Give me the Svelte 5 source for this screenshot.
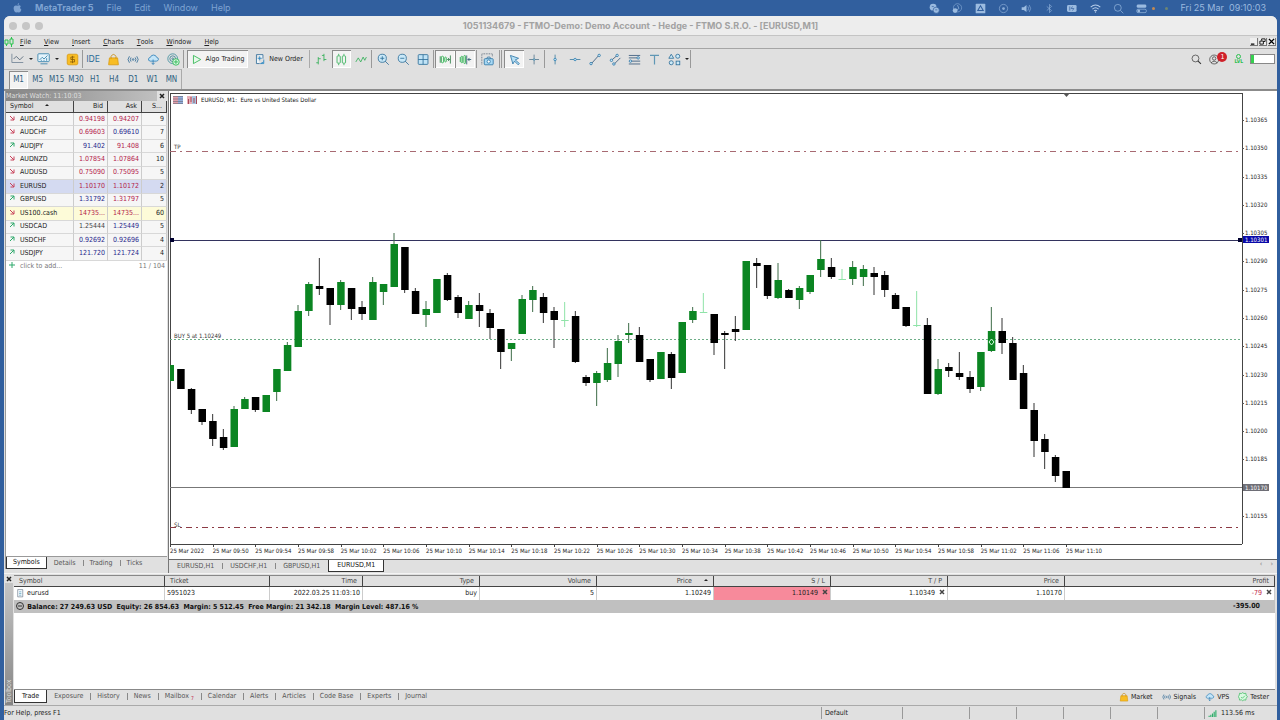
<script>
    const macMenus = ['File', 'Edit', 'Window', 'Help'];
    const menus = ['File', 'View', 'Insert', 'Charts', 'Tools', 'Window', 'Help'];
    const timeframes = ['M1', 'M5', 'M15', 'M30', 'H1', 'H4', 'D1', 'W1', 'MN'];

    const icons = {
        line: '<path d="M1 2v10h13" stroke="#789"/><path d="M3 8l3-3 4 4 4-4" stroke="#567"/>',
        chart: '<rect x="1" y="2" width="13" height="9" rx="1" fill="#e4f3fb" stroke="#3c85ac"/><path d="M3 9l3-3 2 2 4-4M4 13.500h8M5 9v1M8 9v1M11 7v3" stroke="#3c85ac"/>',
        dollar: '<rect x="1.500" y="1.500" width="13" height="13" rx="2" fill="#f8bd24" stroke="#d99a10"/><path d="M10.500 5H6v3h4.500v3H5M8 3.500v9" stroke="#8a5b05"/>',
        bag: '<path d="M3 6h10l1 8.500H2z" fill="#f8bd24" stroke="#d99a10"/><path d="M5 7V4q3-4.500 6 0v3" stroke="#c98c10"/>',
        signal: '<circle cx="7.500" cy="8" r="1" stroke="#2d6995"/><path d="M5 5.500q-2 2.500 0 5M10 5.500q2 2.500 0 5M3 4q-3.500 4 0 8M12 4q3.500 4 0 8" stroke="#2d6995"/>',
        cloud: '<path d="M4 10q-3-.5-2-3 .5-1.500 2-1.500 1-3 4-3t4 3q2.500.5 2 2.500-.5 2-2.500 2z" fill="#c4e5f8" stroke="#2b7db5"/><path d="M7.500 8v6M5.500 12l2 2 2-2" stroke="#2b7db5"/>',
        globe: '<circle cx="7" cy="7" r="6" stroke="#3b8d9c"/><circle cx="7" cy="7" r="3.500" stroke="#387d91"/><circle cx="7" cy="7" r="1" stroke="#387d91"/><circle cx="11" cy="11" r="4" fill="#d9f8e0" stroke="#21b34b"/><path d="M11 8.500v5M8.500 11h5" stroke="#21b34b"/>',
        play: '<path d="M3 3l9 5-9 5z" stroke="#28b34b" fill="#e7faea"/>',
        order: '<path d="M3 2h8v5M3 2v11h4" stroke="#2d6995" fill="#edf6fc"/><path d="M7 4v5M4.500 6.500h5M8 13l4-2V8M8 13h4v-2" stroke="#2382c0"/>',
        bars: '<path d="M4 5v9M1.500 12H4M4 7h3M11 1v9M8.500 3H11M11 8h3" stroke="#2cae53"/>',
        candles: '<path d="M4.500 1v2M4.500 13v2M11 1v2M11 13v2" stroke="#2cae53"/><rect x="2.500" y="3.500" width="4" height="9" rx="1" stroke="#2cae53"/><rect x="9" y="3.500" width="4" height="9" rx="1" stroke="#2cae53"/>',
        zigzag: '<path d="M1 11l3-5 3 5 3-6 2 4 2-4" stroke="#2cae53"/>',
        zoomIn: '<circle cx="6.500" cy="6.500" r="5" fill="#c9e8f8" stroke="#2b6d98"/><path d="M4 6.500h5M6.500 4v5M10 10l4.500 4.500" stroke="#2b6d98"/>',
        zoomOut: '<circle cx="6.500" cy="6.500" r="5" fill="#c9e8f8" stroke="#2b6d98"/><path d="M4 6.500h5M10 10l4.500 4.500" stroke="#2b6d98"/>',
        grid: '<rect x="1.500" y="2" width="12" height="12" rx="1" fill="#c0e3f6" stroke="#2b6d98"/><path d="M7.500 2v12M1.500 8h12" stroke="#2b6d98"/>',
        shift: '<path d="M1.500 4v8M14 3v10M10 8h3M11 6l2 2-2 2" stroke="#267a43"/><rect x="3" y="4" width="2.500" height="8" rx="1" stroke="#29b04c"/><rect x="7" y="5" width="2" height="6" rx="1" stroke="#29b04c"/>',
        scroll: '<path d="M9.500 3v11M15 8h-4M13 6l-2 2 2 2" stroke="#26566c"/><path d="M1.500 5v6" stroke="#29b04c"/><rect x="2.500" y="4" width="2" height="8" rx="1" stroke="#29b04c"/><rect x="6" y="3" width="2" height="10" rx="1" stroke="#29b04c"/>',
        camera: '<path d="M1 14V1h13v3" stroke="#456" stroke-dasharray="1 1"/><rect x="4" y="7" width="11" height="7.500" rx="1" fill="#a8d9f4" stroke="#2b75a6"/><path d="M7 7l1-2h3l1 2" stroke="#2b75a6"/><circle cx="9.500" cy="10.500" r="2" fill="#fff" stroke="#2b75a6"/>',
        cursor: '<path d="M3 3l10 3.500-4 2 5 4.500-1.500 1.500-4.500-4.500-2 3.500z" fill="#b8e0f5" stroke="#2b75a6"/>',
        cross: '<path d="M7.500 2v12M1.500 8h12" stroke="#55778c"/><circle cx="7.500" cy="8" r="1" fill="#fff" stroke="#3785ad"/>',
        vline: '<path d="M7.500 2v12" stroke="#3d7ca0"/><circle cx="7.500" cy="8" r="1.500" fill="#cdeaf8" stroke="#2b7db0"/>',
        hline: '<path d="M1 8h13" stroke="#3d7ca0"/><circle cx="7.500" cy="8" r="1.500" fill="#cdeaf8" stroke="#2b7db0"/>',
        trend: '<path d="M3 13l9-10" stroke="#357"/><circle cx="2.500" cy="13" r="1.500" fill="#cdeaf8" stroke="#2b75a6"/><circle cx="12.500" cy="3" r="1.500" fill="#cdeaf8" stroke="#2b75a6"/>',
        channel: '<path d="M3 9l7-6M6 14l8-8" stroke="#357"/><circle cx="3" cy="9" r="1.500" fill="#cdeaf8" stroke="#2b75a6"/><circle cx="10" cy="3" r="1.500" fill="#cdeaf8" stroke="#2b75a6"/><circle cx="6" cy="13.500" r="1.500" fill="#cdeaf8" stroke="#2b75a6"/>',
        fibo: '<path d="M1 3h14M1 6h10M4 10h11M1 13.500h14" stroke="#357"/><circle cx="12.500" cy="6" r="1.500" fill="#cdeaf8" stroke="#2b75a6"/><circle cx="3" cy="10" r="1.500" fill="#cdeaf8" stroke="#2b75a6"/>',
        text: '<path d="M2.500 3h11M8 3v11" stroke="#5f97b5" stroke-width="1.500"/>',
        shapes: '<path d="M4 1.500l3 5H1z" fill="#cdeaf8" stroke="#2b6d98"/><circle cx="12" cy="4" r="2.500" fill="#cdeaf8" stroke="#2b6d98"/><circle cx="4" cy="12" r="2.500" fill="#cdeaf8" stroke="#2b6d98"/><rect x="10" y="10" width="4.500" height="4.500" fill="#cdeaf8" stroke="#2b6d98"/>',
        search: '<circle cx="6.500" cy="6.500" r="5" stroke="#333"/><path d="M10 10l4.500 4.500" stroke="#333" stroke-width="1.500"/>',
        user: '<circle cx="7.500" cy="8" r="6.500" stroke="#333"/><circle cx="7.500" cy="6.500" r="2.500" stroke="#333"/><path d="M3 13q4.500-5 9 0" stroke="#333"/>',
        tester: '<path d="M7.500 1l2 1.500 3-.5.5 3 2 2.500-2 2.500-.5 3-3-.5-2 1.500-2-1.500-3 .5-.5-3-1.500-2.500 1.500-2.500.5-3 3 .5z" fill="#d9f8e0" stroke="#21b34b"/><path d="M5 8l2 2 4-4" stroke="#21b34b"/>',
        level: '<path d="M2 14v-2M5 14v-4M8 14V8M11 14V5M14 14V2" stroke="#2cae6a" stroke-width="2"/>',
        page: '<path d="M3 1h9v13H3z" fill="#f5fbff" stroke="#567"/><path d="M5.500 5h4M5.500 8h4M5.500 11h4" stroke="#38a"/>',
        wechat: '<circle cx="6" cy="6" r="5" fill="#9bbbe0"/><circle cx="10.500" cy="10.500" r="4.500" fill="#9bbbe0" stroke="#315f9e"/><path d="M9 10h3M4 5h3" stroke="#315f9e"/>',
        rings: '<circle cx="8" cy="7" r="6" stroke="#7fa3d0"/><circle cx="4.500" cy="11" r="3.500" fill="#9bbbe0"/><path d="M8 3l2 5-3 2" stroke="#9bbbe0"/>',
        drive: '<rect x="1" y="1" width="14" height="14" rx="1" fill="#9bbbe0"/><path d="M8 4l4 7H4z" stroke="#315f9e" stroke-width="1.500"/>',
        record: '<circle cx="8" cy="8" r="6" stroke="#8caed8"/><circle cx="8" cy="8" r="2" fill="#8caed8"/>',
        sound: '<path d="M1 6h3l4-3v10l-4-3H1z" fill="#9bbbe0"/><path d="M10 5q2 3 0 6M12 3q4 5 0 10" stroke="#8caed8"/>',
        bluetooth: '<path d="M4 5l7 6-3 3V2l3 3-7 6" stroke="#8caed8"/>',
        battery: '<rect x="0" y="3" width="14" height="10" rx="2" fill="#9bbbe0"/><path d="M15 6v4M4 5v6M8 5l-2 3h4l-2 3" stroke="#315f9e"/>',
        wifi: '<path d="M1 6q7-6 14 0M3.500 9q4.500-4 9 0M6 11.500q2-2 4 0" stroke="#b9cfeb" stroke-width="1.500"/><circle cx="8" cy="13" r="1" fill="#b9cfeb"/>',
        spotlight: '<circle cx="7" cy="7" r="5" stroke="#9bbbe0"/><path d="M11 11l4 4" stroke="#9bbbe0"/>',
        control: '<rect x="1" y="2" width="14" height="5" rx="2" fill="#9bbbe0"/><rect x="1" y="9" width="14" height="5" rx="2" stroke="#9bbbe0"/><circle cx="4" cy="11.500" r="2" fill="#9bbbe0"/>'
    };

    const tray = ['wechat', 'rings', 'drive', 'record', 'sound', 'bluetooth', 'battery', 'wifi', 'spotlight', 'control'];

    const toolGroups = [
        { id: 'style', items: ['bars', 'candles', 'zigzag'] },
        { id: 'zoom', items: ['zoomIn', 'zoomOut', 'grid'] },
        { id: 'scroll', items: ['shift', 'scroll'] },
        { id: 'shot', items: ['camera'] },
        { id: 'pointer', items: ['cursor', 'cross'] },
        { id: 'draw', items: ['vline', 'hline', 'trend', 'channel', 'fibo', 'text', 'shapes'] }
    ];
    const pressed = ['candles', 'shift', 'scroll', 'cursor'];

    // name, up?, bid, bid colour, ask, ask colour, spread
    const symbols = [
        ['AUDCAD', false, '0.94198', 'red', '0.94207', 'red', 9],
        ['AUDCHF', false, '0.69603', 'red', '0.69610', 'blue', 7],
        ['AUDJPY', true, '91.402', 'blue', '91.408', 'red', 6],
        ['AUDNZD', false, '1.07854', 'red', '1.07864', 'red', 10],
        ['AUDUSD', false, '0.75090', 'red', '0.75095', 'red', 5],
        ['EURUSD', false, '1.10170', 'red', '1.10172', 'red', 2],
        ['GBPUSD', true, '1.31792', 'blue', '1.31797', 'red', 5],
        ['US100.cash', false, '14735...', 'red', '14735...', 'red', 60],
        ['USDCAD', true, '1.25444', 'gray', '1.25449', 'blue', 5],
        ['USDCHF', true, '0.92692', 'blue', '0.92696', 'blue', 4],
        ['USDJPY', true, '121.720', 'blue', '121.724', 'blue', 4]
    ];

    // high, body top, body bottom, low, kind (g = up, b = down, l = flat)
    const candles = [
        [365, 365, 381, 381, 'g'], [369, 369, 389, 389, 'b'], [388, 389, 410, 414, 'b'], [409, 409, 422, 425, 'b'],
        [414, 421, 439, 446, 'b'], [429, 437, 448, 450, 'b'], [406, 409, 447, 447, 'g'], [397, 399, 409, 409, 'g'],
        [397, 397, 410, 412, 'b'], [395, 395, 412, 412, 'g'], [369, 369, 392, 401, 'g'], [342, 345, 371, 371, 'g'],
        [305, 311, 347, 347, 'g'], [282, 284, 311, 316, 'g'], [258, 286, 289, 295, 'b'], [288, 288, 305, 325, 'b'],
        [280, 282, 305, 310, 'g'], [288, 288, 309, 320, 'b'], [301, 307, 314, 320, 'b'], [277, 282, 320, 320, 'g'],
        [284, 284, 292, 305, 'g'], [233, 244, 287, 287, 'g'], [247, 247, 290, 293, 'b'], [288, 291, 314, 314, 'b'],
        [301, 309, 315, 327, 'g'], [279, 279, 313, 313, 'g'], [273, 275, 300, 301, 'b'], [295, 297, 313, 318, 'b'],
        [301, 305, 319, 319, 'g'], [293, 305, 311, 327, 'b'], [309, 313, 328, 339, 'b'], [329, 329, 352, 369, 'b'],
        [343, 343, 349, 361, 'g'], [295, 299, 334, 334, 'g'], [286, 290, 300, 312, 'g'], [293, 297, 313, 323, 'b'],
        [307, 311, 320, 348, 'b'], [302, 320, 321, 327, 'l'], [311, 316, 362, 363, 'b'], [375, 377, 383, 386, 'b'],
        [371, 373, 383, 406, 'g'], [348, 363, 380, 382, 'g'], [335, 341, 364, 377, 'g'], [323, 333, 335, 343, 'g'],
        [327, 335, 362, 362, 'b'], [359, 359, 380, 382, 'b'], [352, 352, 379, 379, 'g'], [352, 354, 378, 389, 'b'],
        [322, 322, 373, 373, 'g'], [307, 311, 320, 323, 'g'], [293, 312, 313, 313, 'l'], [314, 314, 343, 355, 'b'],
        [331, 333, 335, 369, 'b'], [316, 329, 332, 341, 'b'], [261, 261, 330, 330, 'g'], [258, 263, 266, 288, 'b'],
        [265, 265, 296, 299, 'b'], [263, 280, 298, 299, 'g'], [289, 290, 298, 298, 'b'], [286, 288, 300, 309, 'g'],
        [275, 275, 292, 294, 'g'], [240, 259, 270, 277, 'g'], [258, 267, 277, 279, 'b'], [269, 279, 280, 280, 'l'],
        [261, 267, 279, 285, 'g'], [265, 269, 277, 286, 'g'], [267, 273, 277, 295, 'b'], [271, 275, 290, 297, 'b'],
        [293, 295, 309, 309, 'b'], [307, 307, 326, 327, 'b'], [291, 325, 326, 327, 'l'], [318, 325, 394, 394, 'b'],
        [359, 369, 394, 395, 'g'], [363, 367, 371, 377, 'b'], [352, 373, 377, 380, 'b'], [371, 377, 389, 393, 'b'],
        [352, 352, 387, 391, 'g'], [307, 331, 351, 352, 'g'], [318, 331, 343, 354, 'b'], [337, 343, 380, 380, 'b'],
        [365, 373, 409, 409, 'b'], [403, 410, 441, 457, 'b'], [434, 439, 452, 469, 'b'], [455, 457, 476, 482, 'b'],
        [471, 471, 488, 488, 'b']
    ];
    const colors = { g: '#0b8522', b: '#000', l: '#8fe3a8' };
    const wicks = { g: '#3d6b46', b: '#333', l: '#8fe3a8' };

    const plotWidth = 1072;
    const plotHeight = 451;
    const plotTop = 93;
    const step = 32 / 3;

    const priceTicks = Array.from({ length: 15 }, (_, i) => ({
        label: ((110365 - i * 15) / 100000).toFixed(5),
        top: ((27 + (i * 396) / 14) / plotHeight) * 100
    }));

    const timeTicks = Array.from({ length: 22 }, (_, i) => {
        const m = 9 * 60 + 46 + i * 4;
        const hh = String(Math.floor(m / 60)).padStart(2, '0');
        const mm = String(m % 60).padStart(2, '0');
        return { label: i === 0 ? '25 Mar 2022' : `25 Mar ${hh}:${mm}`, x: i * step * 4 };
    });

    const watchTabs = ['Symbols', 'Details', 'Trading', 'Ticks'];
    const chartTabs = ['EURUSD,H1', 'USDCHF,H1', 'GBPUSD,H1', 'EURUSD,M1'];
    const toolboxTabs = ['Trade', 'Exposure', 'History', 'News', 'Mailbox', 'Calendar', 'Alerts', 'Articles', 'Code Base', 'Experts', 'Journal'];
    const services = [['bag', 'Market'], ['signal', 'Signals'], ['cloud', 'VPS'], ['tester', 'Tester']];
</script>

{#snippet icon(name)}
    <svg class="icon" viewBox="0 0 16 16" fill="none" aria-hidden="true">{@html icons[name]}</svg>
{/snippet}

{#snippet closeMark()}
    <svg class="mark" viewBox="0 0 6 6" aria-hidden="true"><path d="M1 1l4 4M5 1l-4 4" stroke="currentColor" stroke-width="1.500" /></svg>
{/snippet}

<div class="desktop">
    <header class="mac-bar">
        <svg class="apple" viewBox="0 0 16 18" aria-hidden="true">
            <path d="M11 0q0 3-3 4 0-3 3-4zM8 5q4-2 6 1-3 3 1 6-2 6-5 5-2-1-4 0Q2 17 1 10 1 3 8 5z" fill="#7ea3d2" />
        </svg>
        <b>MetaTrader 5</b>
        {#each macMenus as m}<span>{m}</span>{/each}
        <div class="tray">
            {#each tray as t}{@render icon(t)}{/each}
            <i class="dot"></i>
            <i class="dot dim"></i>
        </div>
        <time>Fri 25 Mar&nbsp; 09:10:03</time>
    </header>

    <div class="window">
        <div class="title-bar">
            <i></i><i></i><i></i>
            <h1>1051134679 - FTMO-Demo: Demo Account - Hedge - FTMO S.R.O. - [EURUSD,M1]</h1>
        </div>

        <nav class="menu-bar">
            <svg class="logo" viewBox="0 0 10 10" fill="none" aria-hidden="true">
                <path d="M1 3h3v4H1zM6 2h3v5H6zM2.500 7v2M7.500 0v2M7.500 7v3" stroke="#2bc44e" />
            </svg>
            {#each menus as m}
                <button><u>{m[0]}</u>{m.slice(1)}</button>
            {/each}
            <div class="mdi">
                <button aria-label="Minimize"><svg viewBox="0 0 8 8"><path d="M1 7h4" stroke="#000" stroke-width="1.500" /></svg></button>
                <button aria-label="Restore"><svg viewBox="0 0 8 8" fill="none"><path d="M3 3V1h4v3H5M1 3.500h4V7H1z" stroke="#000" /></svg></button>
                <button aria-label="Close"><svg viewBox="0 0 8 8"><path d="M1 1l6 6M7 1L1 7" stroke="#000" stroke-width="1.500" /></svg></button>
            </div>
        </nav>

        <div class="toolbar">
            <div class="group main">
                <button class="drop" aria-label="New chart">{@render icon('line')}<i class="caret"></i></button>
                <button class="drop" aria-label="Profiles">{@render icon('chart')}<i class="caret"></i></button>
                <button aria-label="Symbols">{@render icon('dollar')}</button>
            </div>
            <div class="group apps">
                <button class="ide">IDE</button>
                {#each ['bag', 'signal', 'cloud', 'globe'] as name}
                    <button aria-label={name}>{@render icon(name)}</button>
                {/each}
            </div>
            <div class="group trade">
                <button class="algo pressed">{@render icon('play')}Algo Trading</button>
                <button class="order">{@render icon('order')}New Order</button>
            </div>
            {#each toolGroups as g}
                <div class="group {g.id}">
                    {#each g.items as name}
                        <button class:pressed={pressed.includes(name)} aria-label={name}>{@render icon(name)}</button>
                    {/each}
                </div>
            {/each}
            <button class="more" aria-label="More objects"><i class="caret"></i></button>
            <div class="account">
                <button aria-label="Search">{@render icon('search')}</button>
                <button class="user" aria-label="Notifications">{@render icon('user')}<span class="badge">1</span></button>
                <div class="lvl"><i></i><span>LVL</span></div>
                <div class="meter"><i></i></div>
            </div>
        </div>

        <div class="timeframes">
            {#each timeframes as t, i}
                <button class:pressed={i === 0}>{t}</button>
            {/each}
        </div>

        <main>
            <section class="watch">
                <div class="watch-title">
                    <span>Market Watch: 11:10:03</span>
                    <button aria-label="Close">{@render closeMark()}</button>
                </div>
                <div class="watch-body">
                    <table>
                        <thead>
                            <tr><th class="name">Symbol <i class="up"></i></th><th>Bid</th><th>Ask</th><th class="spread">S...</th></tr>
                        </thead>
                        <tbody>
                            {#each symbols as [name, up, bid, bidColor, ask, askColor, spread]}
                                <tr class:selected={name === 'EURUSD'} class:marked={name === 'US100.cash'}>
                                    <td class="name">
                                        <svg class="arrow" viewBox="0 0 6 6" fill="none" stroke={up ? '#2ca86a' : '#c8425a'} aria-hidden="true">
                                            <path d={up ? 'M1 5l4-4M1.500 1H5v3.500' : 'M1 1l4 4M5 1.500V5H1.500'} />
                                        </svg>{name}
                                    </td>
                                    <td class={bidColor}>{bid}</td>
                                    <td class={askColor}>{ask}</td>
                                    <td>{spread}</td>
                                </tr>
                            {/each}
                            <tr class="add">
                                <td class="name" colspan="2">
                                    <svg class="arrow" viewBox="0 0 6 6" stroke="#2ca86a" aria-hidden="true"><path d="M0 3h6M3 0v6" /></svg>click to add...
                                </td>
                                <td colspan="2">11 / 104</td>
                            </tr>
                        </tbody>
                    </table>
                </div>
                <div class="tabs watch-tabs">
                    {#each watchTabs as t, i}<button class:active={i === 0}>{t}</button>{/each}
                </div>
            </section>

            <section class="chart">
                <div class="chart-box">
                    <div class="plot">
                        <svg viewBox="0 0 {plotWidth} {plotHeight}" preserveAspectRatio="none" aria-label="EURUSD M1 candles">
                            <path d="M0 58.500H{plotWidth}" stroke="#a86a72" stroke-dasharray="6 4 2 4" />
                            <path d="M0 434.500H{plotWidth}" stroke="#8c3a44" stroke-dasharray="6 4 2 4" />
                            <path d="M0 246.500H{plotWidth}" stroke="#6fae88" stroke-dasharray="2 2" />
                            <path d="M0 147.500H{plotWidth}" stroke="#33335e" />
                            <path d="M0 394.500H{plotWidth}" stroke="#777" />
                            {#each candles as [high, top, bottom, low, kind], i}
                                <g transform="translate({i * step} {-plotTop})">
                                    <path d="M0 {high}V{low}" stroke={wicks[kind]} />
                                    <rect x="-3.500" y={top} width="7.500" height={bottom - top} fill={colors[kind]} />
                                </g>
                            {/each}
                            <rect x="0" y="145" width="4" height="4" fill="#000030" />
                            <rect x="1068" y="145" width="4" height="4" fill="#000030" />
                            <path d="M821.500 246l2.500 3-2.500 3-2.500-3z" fill="none" stroke="#d8ffe4" />
                            <path d="M893 0h7l-3.500 4z" fill="#555" />
                        </svg>
                        <div class="plot-title">
                            <svg viewBox="0 0 24 8" aria-hidden="true">
                                <path d="M0 0h5v8H0z" fill="#e2a0aa" /><path d="M5 0h5v8H5z" fill="#93b0dc" />
                                <path d="M0 .500h10M0 3h10M0 5.500h10M0 7.500h10" stroke="#667" stroke-width=".600" />
                                <path d="M14 0h5v8h-5z" fill="#e7b0b8" /><path d="M19 0h5v8h-5z" fill="#a7c4e0" />
                                <path d="M15.500 3v5M18 1v5M21 2v5M23.500 0v8" stroke="#a44a5a" />
                            </svg>
                            EURUSD, M1:&nbsp; Euro vs United States Dollar
                        </div>
                        <span class="level tp">TP</span>
                        <span class="level buy">BUY 5 at 1.10249</span>
                        <span class="level sl">SL</span>
                    </div>
                    <div class="price-axis">
                        {#each priceTicks as t}
                            {#if t.label !== '1.10170'}<span style="top: {t.top}%">{t.label}</span>{/if}
                        {/each}
                        <span class="tag line" style="top: {(147 / plotHeight) * 100}%">1.10301</span>
                        <span class="tag bid" style="top: {(394.5 / plotHeight) * 100}%">1.10170</span>
                    </div>
                    <div class="time-axis">
                        {#each timeTicks as t}
                            <span style="left: {(t.x / plotWidth) * 100}%">{t.label}</span>
                        {/each}
                    </div>
                </div>
                <div class="tabs chart-tabs">
                    {#each chartTabs as t, i}<button class:active={i === 3}>{t}</button>{/each}
                    <span class="scrollers"><b>‹</b><b>›</b></span>
                </div>
            </section>
        </main>

        <section class="toolbox">
            <div class="side">
                <button aria-label="Close toolbox">{@render closeMark()}</button>
                <span>Toolbox</span>
            </div>
            <div class="toolbox-main">
                <div class="trades">
                    <table>
                        <colgroup>
                            <col class="c1" /><col class="c2" /><col class="c3" /><col /><col /><col /><col /><col /><col /><col class="c10" />
                        </colgroup>
                        <thead>
                            <tr>
                                <th class="left">Symbol</th><th class="left">Ticket</th><th>Time</th><th>Type</th><th>Volume</th>
                                <th class="sorted">Price <i class="up"></i></th><th>S / L</th><th>T / P</th><th>Price</th><th>Profit</th>
                            </tr>
                        </thead>
                        <tbody>
                            <tr>
                                <td class="left">{@render icon('page')} eurusd</td>
                                <td class="left">5951023</td>
                                <td>2022.03.25 11:03:10</td>
                                <td>buy</td>
                                <td>5</td>
                                <td>1.10249</td>
                                <td class="stop">1.10149 <button aria-label="Remove stop">{@render closeMark()}</button></td>
                                <td>1.10349 <button aria-label="Remove target">{@render closeMark()}</button></td>
                                <td>1.10170</td>
                                <td><span class="loss">-79</span> <button aria-label="Close position">{@render closeMark()}</button></td>
                            </tr>
                            <tr class="balance">
                                <td class="left" colspan="9">
                                    <svg class="minus" viewBox="0 0 8 8" fill="none" stroke="#333" aria-hidden="true"><circle cx="4" cy="4" r="3.500" /><path d="M2 4h4" /></svg>
                                    Balance: 27 249.63 USD&nbsp; Equity: 26 854.63&nbsp; Margin: 5 512.45&nbsp; Free Margin: 21 342.18&nbsp; Margin Level: 487.16 %
                                </td>
                                <td>-395.00</td>
                            </tr>
                        </tbody>
                    </table>
                </div>
                <div class="tabs toolbox-tabs">
                    {#each toolboxTabs as t, i}
                        <button class:active={i === 0}>{t}{#if t === 'Mailbox'}<sub>7</sub>{/if}</button>
                    {/each}
                    <div class="services">
                        {#each services as [name, label]}<a href="#{label}">{@render icon(name)}{label}</a>{/each}
                    </div>
                </div>
            </div>
        </section>

        <footer>
            <span class="help">For Help, press F1</span>
            <span class="profile">Default</span>
            <span></span><span></span><span></span><span></span><span></span><span></span>
            <span class="ping">{@render icon('level')}113.56 ms</span>
        </footer>
    </div>
</div>

<style>
    :global(body) {
        background: #315f9e;
    }

    .desktop {
        min-height: 100vh;
        display: flex;
        flex-direction: column;
        box-sizing: border-box;
        background: #315f9e;
        color: #222;
        font-family: 'DejaVu Sans Condensed', 'DejaVu Sans', sans-serif;
        font-size: 7px;
        line-height: 9px;
    }

    button {
        border: 0;
        padding: 0;
        background: none;
        color: inherit;
        font: inherit;
        display: inline-flex;
        align-items: center;
        justify-content: center;
    }

    .icon {
        width: 13px;
        height: 13px;
        flex: none;
    }

    .mark {
        width: 6px;
        height: 6px;
        display: block;
    }

    .caret {
        border: 2px solid transparent;
        border-top-color: #222;
        border-bottom: 0;
    }

    .up {
        display: inline-block;
        border: 2px solid transparent;
        border-bottom-color: #222;
        border-top: 0;
        margin: 0 0 2px 10px;
    }

    /* macOS menu bar */
    .mac-bar {
        height: 16px;
        display: flex;
        align-items: center;
        gap: 13px;
        padding: 0 14px 0 13px;
        color: #7ea3d2;
        font-family: Inter, sans-serif;
        font-size: 9px;
        line-height: 12px;
    }

    .apple {
        width: 9px;
        height: 10px;
    }

    .tray {
        margin-left: auto;
        display: flex;
        align-items: center;
        gap: 10px;
    }

    .tray .icon {
        width: 13px;
        height: 11px;
    }

    .dot {
        width: 3px;
        height: 3px;
        border-radius: 50%;
        background: #c48a52;
    }

    .tray .icon + .dot {
        margin-left: -6px;
    }

    .dot.dim {
        background: #6d8573;
    }

    .mac-bar time {
        color: #9bb9df;
    }

    /* Window frame */
    .window {
        flex: 1;
        display: flex;
        flex-direction: column;
        margin: 0 3px 0 4px;
        border-radius: 6px 6px 0 0;
        background: #e0e0e0;
        overflow: hidden;
    }

    .title-bar {
        height: 19px;
        display: flex;
        align-items: center;
        gap: 5px;
        padding: 0 44px 0 5px;
        background: #ededed;
        border-bottom: 1px solid #c4c4c4;
    }

    .title-bar i {
        width: 8px;
        height: 8px;
        border-radius: 50%;
        background: #c6c6c6;
    }

    h1 {
        flex: 1;
        margin: 0;
        text-align: center;
        color: #a2a2a2;
        font: bold 9px/12px Inter, sans-serif;
    }

    .menu-bar {
        height: 12px;
        display: flex;
        align-items: center;
        gap: 13px;
        border-bottom: 1px solid #a5a5a5;
    }

    .logo {
        width: 10px;
        height: 10px;
        margin-right: -7px;
    }

    .mdi {
        display: flex;
        margin-left: auto;
    }

    .mdi button {
        width: 8px;
        height: 8px;
        margin-right: 1px;
        border: 1px solid #777;
        border-width: 0 1px 1px 0;
        background: #eee;
    }

    /* Toolbars */
    .toolbar {
        height: 20px;
        display: flex;
        align-items: center;
        color: #222;
    }

    .group {
        height: 18px;
        display: flex;
        border-right: 1px solid #999;
        box-sizing: border-box;
        align-items: center;
    }

    .group button {
        flex: 1;
        height: 18px;
    }

    .group .drop {
        flex: 0 0 26px;
        justify-content: flex-start;
        gap: 4px;
    }

    .group .drop .icon {
        width: 14px;
        height: 14px;
    }

    .pressed {
        background: #f3f3f3;
        box-shadow: inset 1px 1px #8b8b8b, inset -1px -1px #fff;
    }

    .main { width: 79px; padding-left: 7px; }
    .apps { width: 101px; }
    .trade { width: 126px; padding-left: 3px; border-right-color: #aaa; }
    .style { width: 62px; padding: 0 0 0 2px; }
    .zoom { width: 62px; padding-left: 1px; }
    .scroll { width: 43px; padding: 0 1px; }
    .shot { width: 25px; padding-right: 1px; border-right: 3px double #999; }
    .pointer { width: 43px; padding-left: 2px; }
    .draw { width: 139px; padding-left: 1px; border-right: 0; }

    .group .algo {
        gap: 2px;
        flex: 0 0 61px;
    }

    .group .order {
        gap: 2px;
    }

    .ide {
        color: #2b6d98;
        font-size: 9px;
    }

    .more {
        width: 7px;
        height: 18px;
        border-right: 1px solid #999;
    }

    .account {
        margin-left: auto;
        display: flex;
        align-items: center;
        gap: 7px;
        padding-right: 2px;
    }

    .account .icon {
        width: 11px;
        height: 11px;
    }

    .user {
        position: relative;
        width: 18px;
        justify-content: flex-start;
    }

    .badge {
        position: absolute;
        right: 0;
        top: -2px;
        width: 10px;
        height: 10px;
        border-radius: 50%;
        background: #cf2029;
        color: #fff;
        line-height: 10px;
    }

    .lvl {
        display: flex;
        flex-direction: column;
        align-items: center;
        color: #2bbf4e;
        font-size: 5px;
        font-weight: bold;
        line-height: 5px;
    }

    .lvl i {
        width: 3px;
        height: 3px;
        border: 1px solid #2bbf4e;
        border-radius: 50%;
    }

    .meter {
        width: 23px;
        height: 8px;
        border: 1px solid #888;
        background: #fff;
    }

    .meter i {
        display: block;
        width: 3px;
        height: 8px;
        background: #35d04f;
    }

    .timeframes {
        height: 20px;
        width: 178px;
        display: flex;
        align-items: center;
        padding-left: 5px;
        box-sizing: border-box;
        border-top: 1px solid #b5b5b5;
        border-right: 1px solid #aaa;
        color: #2f617f;
        font-size: 8px;
    }

    .timeframes button {
        flex: 1;
        height: 18px;
    }

    /* Work area */
    main {
        flex: 1;
        display: flex;
        gap: 1px;
        border-top: 2px solid #8b8b8b;
    }

    .watch {
        width: 161px;
        display: flex;
        flex-direction: column;
        border-left: 1px solid #999;
        margin: 0 0 4px 1px;
    }

    .watch-title {
        height: 10px;
        display: flex;
        align-items: center;
        justify-content: space-between;
        background: linear-gradient(90deg, #858585, #c4c4c4);
        color: #dedede;
    }

    .watch-title button {
        width: 10px;
        height: 10px;
        background: #e0e0e0;
        color: #222;
    }

    .watch-body {
        flex: 1;
        background: #fff;
    }

    table {
        width: 100%;
        border-collapse: separate;
        border-spacing: 0;
        table-layout: fixed;
    }

    th {
        height: 10px;
        padding: 0 4px;
        background: #e0e0e0;
        border-right: 1px solid #444;
        border-bottom: 1px solid #444;
        font-weight: normal;
        text-align: right;
        white-space: nowrap;
    }

    td {
        padding: 0 2px;
        text-align: right;
        white-space: nowrap;
    }

    .watch table {
        height: 172px;
    }

    .watch th {
        height: 11px;
    }

    .watch th:nth-child(2),
    .watch th:nth-child(3) {
        width: 25px;
    }

    .watch th.spread {
        width: 16px;
    }

    .watch .name {
        text-align: left;
    }

    .watch td {
        background: #f6f6f6;
        border-right: 1px solid #ccc;
        border-bottom: 1px solid #d8d8d8;
    }

    .watch .selected td { background: #d4daf1; }
    .watch .marked td { background: #fdfbd8; }

    .watch .add td {
        background: #fff;
        border: 0;
        color: #777;
    }

    .arrow {
        width: 6px;
        height: 6px;
        margin: 0 5px 0 1px;
        vertical-align: 0;
    }

    .red { color: #b3204a; }
    .blue { color: #26268c; }
    .gray { color: #444; }

    .tabs {
        display: flex;
        align-items: stretch;
        color: #555;
    }

    .tabs button {
        position: relative;
        padding: 0 8px;
    }

    .tabs button:not(.active) + button:not(.active)::before {
        content: '';
        position: absolute;
        left: 0;
        top: 3px;
        bottom: 3px;
        border-left: 1px solid #888;
    }

    .tabs .active {
        background: #fff;
        color: #111;
        border: 1px solid #333;
        border-top: 0;
    }

    .watch-tabs {
        height: 12px;
        border-top: 1px solid #999;
    }

    .watch-tabs button { padding: 0 7px; }
    .watch-tabs .active { padding: 0 6px; }

    .chart {
        flex: 1;
        min-width: 0;
        display: flex;
        flex-direction: column;
        border-left: 1px solid #777;
    }

    .chart-box {
        flex: 1;
        display: grid;
        grid-template: 1fr 15px / 1fr 35px;
        background: #fff;
        border-bottom: 1px solid #666;
        padding: 2px 0 0 1px;
    }

    .plot {
        position: relative;
        box-shadow: inset 0 1px #444, 1px 0 #444, 0 1px #444, inset 1px 0 #444;
        color: #333;
        font-size: 6px;
        line-height: 8px;
    }

    .plot > svg {
        position: absolute;
        inset: 0;
        width: 100%;
        height: 100%;
    }

    .plot-title {
        position: relative;
        display: flex;
        align-items: center;
        gap: 4px;
        padding: 3px;
        color: #111;
    }

    .plot-title svg {
        width: 24px;
        height: 8px;
    }

    .level {
        position: absolute;
        left: 4px;
    }

    .tp { top: 11%; }
    .buy { top: 53%; }
    .sl { top: 95%; }

    .price-axis,
    .time-axis {
        position: relative;
        color: #222;
        font-size: 6px;
        line-height: 8px;
    }

    .price-axis span {
        position: absolute;
        left: 3px;
        margin-top: -4px;
    }

    .price-axis span:not(.tag)::before {
        content: '';
        position: absolute;
        left: -3px;
        top: 4px;
        width: 2px;
        border-top: 1px solid #555;
    }

    .price-axis .tag {
        left: 1px;
        padding: 0 2px;
        color: #fff;
        line-height: 7px;
    }

    .tag.line { background: #0909a8; }
    .tag.bid { background: #6e6e76; }

    .time-axis span {
        position: absolute;
        top: 3px;
        white-space: nowrap;
    }

    .time-axis span::before {
        content: '';
        position: absolute;
        top: -2px;
        height: 2px;
        border-left: 1px solid #444;
    }

    .chart-tabs {
        height: 12px;
        margin-bottom: 1px;
    }

    .scrollers {
        margin-left: auto;
        display: flex;
        gap: 8px;
        padding-right: 4px;
        color: #999;
    }

    /* Toolbox */
    .toolbox {
        display: flex;
        height: 131px;
        border-top: 1px solid #f4f4f4;
    }

    .side {
        width: 9px;
        display: flex;
        flex-direction: column;
        align-items: center;
    }

    .side button {
        height: 9px;
    }

    .side span {
        flex: 1;
        width: 8px;
        writing-mode: vertical-rl;
        transform: rotate(180deg);
        background: linear-gradient(#858585, #c4c4c4);
        color: #dedede;
        line-height: 8px;
        padding-top: 2px;
    }

    .toolbox-main {
        flex: 1;
        min-width: 0;
        display: flex;
        flex-direction: column;
        margin: 1px 2px 0 1px;
    }

    .trades {
        flex: 1;
        background: #fff;
        border-top: 1px solid #888;
    }

    .trades col { width: 117px; }
    .trades col.c1 { width: 151px; }
    .trades col.c2 { width: 105px; }
    .trades col.c3 { width: 93px; }
    .trades col.c10 { width: auto; }

    .trades .left {
        text-align: left;
    }

    .trades th {
        padding: 0 5px;
        color: #444;
    }

    .trades td {
        height: 13px;
        border-right: 1px solid #ccc;
    }

    .trades td .icon {
        width: 9px;
        height: 9px;
        vertical-align: middle;
    }

    .trades td button {
        margin-left: 2px;
        color: #444;
    }

    .trades td.stop {
        background: #f78a9b;
    }

    .loss {
        color: #c02848;
    }

    .minus {
        width: 8px;
        height: 8px;
        margin-right: 1px;
        vertical-align: -1px;
    }

    .trades .balance td {
        background: #c0c0c0;
        border: 0;
        color: #111;
        font-weight: bold;
    }

    .trades .balance td:last-child {
        padding-right: 15px;
    }

    .toolbox-tabs {
        height: 13px;
        border-top: 1px solid #888;
        margin-bottom: 2px;
    }

    .toolbox-tabs button {
        padding: 0 7px;
    }

    sub {
        margin-left: 2px;
        padding-top: 4px;
        color: #c02848;
        font-size: 5px;
        line-height: 5px;
    }

    .services {
        margin-left: auto;
        display: flex;
        gap: 9px;
        padding: 1px 6px 0 0;
    }

    .services a {
        display: flex;
        align-items: center;
        gap: 2px;
        color: #222;
        text-decoration: none;
    }

    .services .icon {
        width: 10px;
        height: 10px;
    }

    footer {
        height: 14px;
        display: flex;
        align-items: center;
        border-top: 1px solid #aaa;
    }

    footer span {
        width: 47px;
        height: 12px;
        box-sizing: border-box;
        border-left: 1px solid #999;
        display: flex;
        align-items: center;
        padding-left: 3px;
    }

    footer .help {
        flex: 1;
        border: 0;
        padding: 0;
    }

    footer .profile {
        width: 81px;
    }

    footer .profile + span {
        width: 67px;
    }

    footer .ping {
        width: 73px;
        gap: 4px;
    }

    .ping .icon {
        width: 9px;
        height: 9px;
    }
</style>
